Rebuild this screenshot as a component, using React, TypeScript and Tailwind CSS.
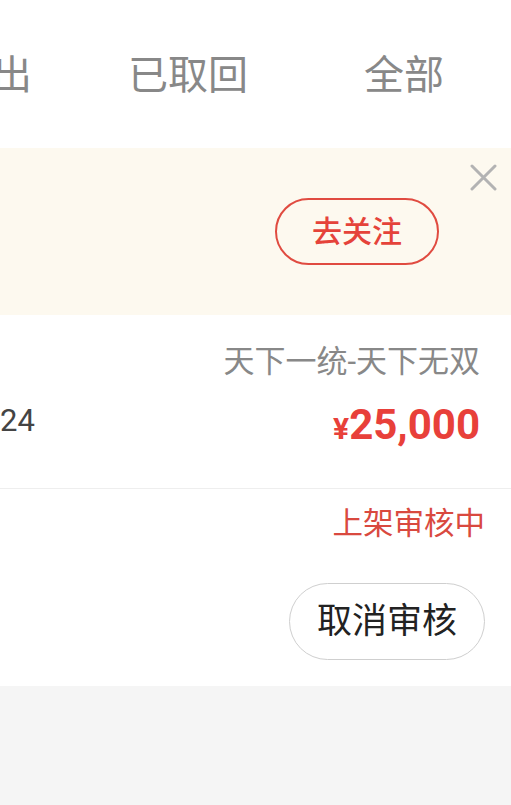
const font = "font-['Roboto','Noto_Sans_CJK_SC',sans-serif]";

function Tabs() {
  const tabs = ["已售出", "已取回", "全部"];
  return (
    <div className="h-[148px] bg-white overflow-hidden">
      <div className="flex h-full items-center pt-[3px] ml-[-136px]">
        {tabs.map((t) => (
          <div key={t} className="w-[216px] shrink-0 text-center text-[40px] leading-[48px] text-[#888888]">
            {t}
          </div>
        ))}
      </div>
    </div>
  );
}

function FollowBanner() {
  return (
    <div className="relative flex h-[167px] items-center justify-end bg-[#fdf9ef] pr-[72px]">
      <button className="absolute right-[14px] top-[16px] p-0" aria-label="close">
        <svg width="27" height="27" viewBox="0 0 27 27" fill="none" stroke="#b3b3b3" strokeWidth="3" strokeLinecap="round">
          <path d="M2 2 L25 25 M25 2 L2 25" />
        </svg>
      </button>
      <button className="flex h-[67px] w-[164px] items-center justify-center rounded-full border-2 border-[#e04b40] text-[30px] font-medium leading-none text-[#e5433a]">
        去关注
      </button>
    </div>
  );
}

function ItemInfo() {
  return (
    <div className="h-[174px] border-b border-[#eeeeee] bg-white pr-[31px] pt-[27px]">
      <div className="text-right text-[31px] leading-[40px] text-[#888888]">天下一统-天下无双</div>
      <div className="mt-[19px] flex items-start justify-between">
        <span className="text-[31px] leading-[40px] text-[#444444]">24</span>
        <span className="text-[42px] font-bold leading-[48px] text-[#e8403a]">
          <span className="text-[30px]">¥</span>25,000
        </span>
      </div>
    </div>
  );
}

function ReviewStatus() {
  return (
    <div className="flex h-[197px] flex-col items-end bg-white pr-[26px] pt-[15px]">
      <div className="text-[30.5px] leading-[40px] text-[#d9493f]">上架审核中</div>
      <button className="mt-[39px] flex h-[77px] w-[196px] items-center justify-center rounded-full border border-[#cfcfcf] text-[35px] leading-none text-[#222222]">
        取消审核
      </button>
    </div>
  );
}

export default function App() {
  return (
    <div className={`${font} min-h-[805px] w-[511px] overflow-hidden bg-[#f5f5f5]`}>
      <Tabs />
      <FollowBanner />
      <ItemInfo />
      <ReviewStatus />
    </div>
  );
}
